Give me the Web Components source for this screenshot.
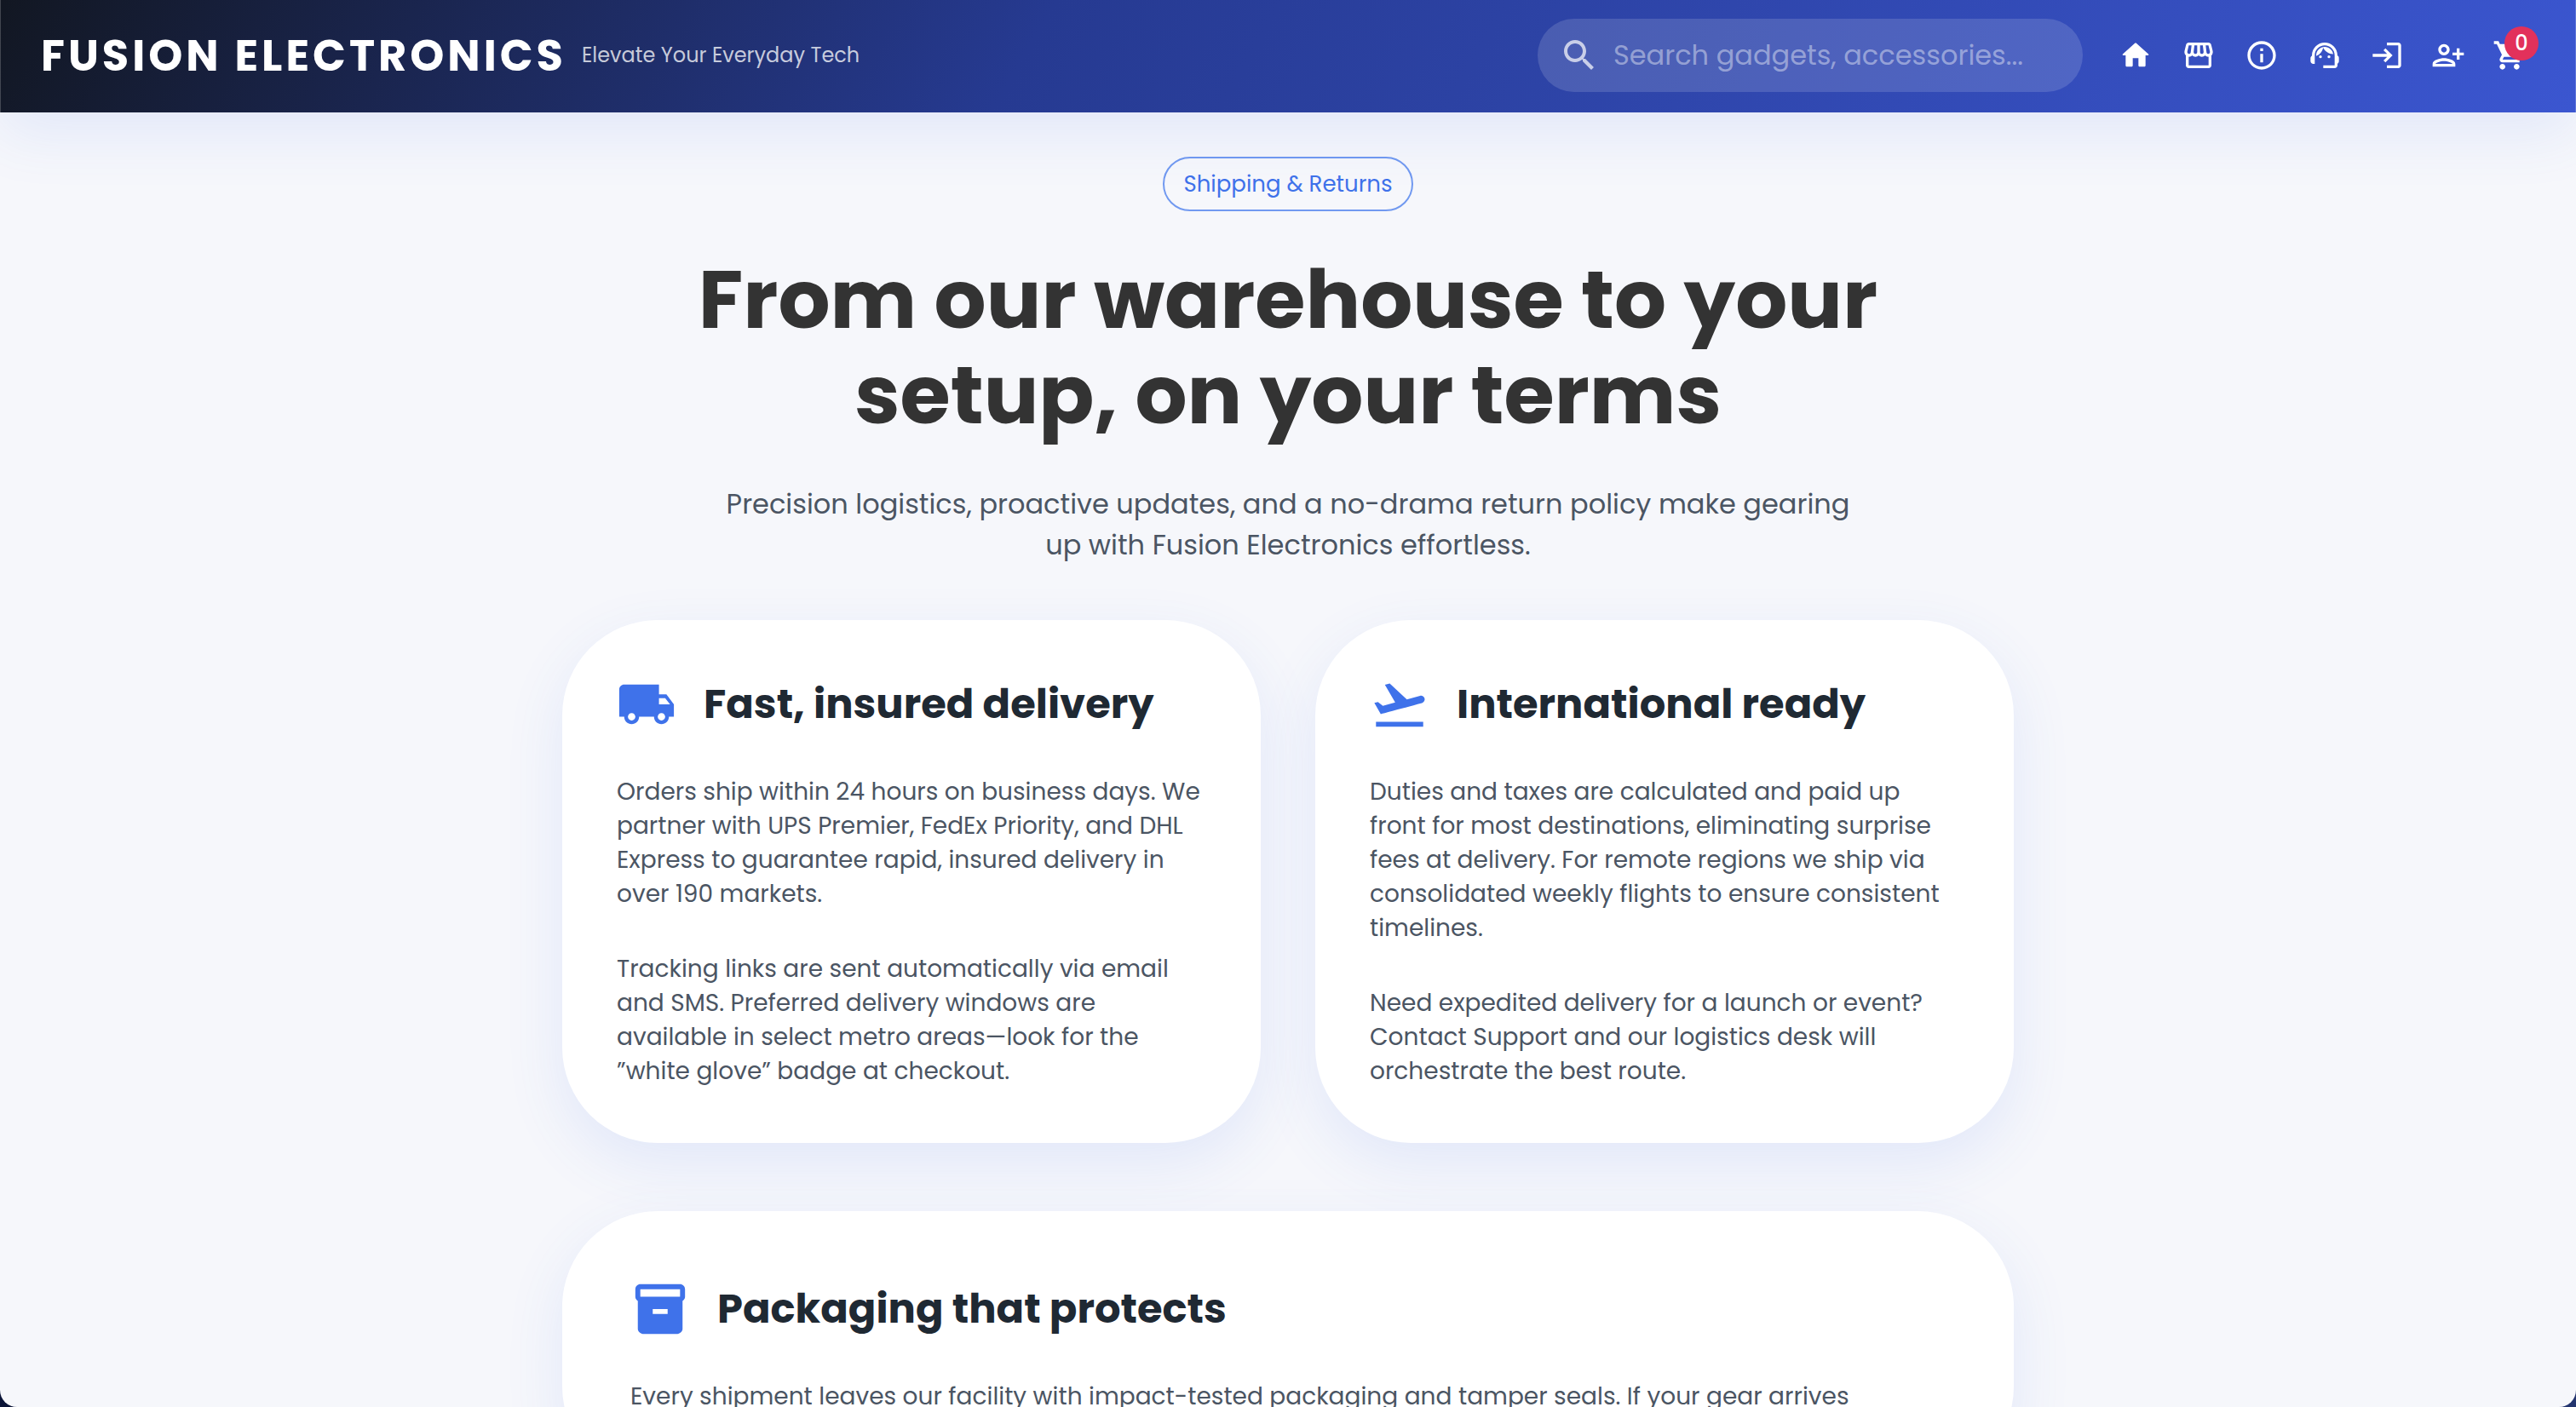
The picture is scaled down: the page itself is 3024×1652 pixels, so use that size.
<!DOCTYPE html>
<html lang="en">
<head>
<meta charset="utf-8">
<title>Shipping &amp; Returns – Fusion Electronics</title>
<style>
  html, body { margin: 0; height: 100%; }
  body {
    background: linear-gradient(90deg, #0b1437, #24356f);
    font-family: Poppins, Inter, "Open Sans", sans-serif;
    font-size: 28px;
    --blue: #3f72ea;
    --slate: #4b5563;
    --lift: 0 24px 70px rgba(60, 112, 235, .11);
  }
</style>
</head>
<body>
<fusion-page>
  <fusion-header slot="header"></fusion-header>
  <fusion-hero>
    <span slot="tag">Shipping &amp; Returns</span>
    <span slot="title">From our warehouse to your setup, on your terms</span>
    <span slot="lead">Precision logistics, proactive updates, and a no-drama return policy make gearing up with Fusion Electronics effortless.</span>
  </fusion-hero>
  <fusion-cards>
    <fusion-card icon="truck">
      <span slot="title">Fast, insured delivery</span>
      <p>Orders ship within 24 hours on business days. We partner with UPS Premier, FedEx Priority, and DHL Express to guarantee rapid, insured delivery in over 190 markets.</p>
      <p>Tracking links are sent automatically via email and SMS. Preferred delivery windows are available in select metro areas—look for the ”white glove” badge at checkout.</p>
    </fusion-card>
    <fusion-card icon="plane">
      <span slot="title">International ready</span>
      <p>Duties and taxes are calculated and paid up front for most destinations, eliminating surprise fees at delivery. For remote regions we ship via consolidated weekly flights to ensure consistent timelines.</p>
      <p>Need expedited delivery for a launch or event? Contact Support and our logistics desk will orchestrate the best route.</p>
    </fusion-card>
    <fusion-card icon="box" wide>
      <span slot="title">Packaging that protects</span>
      <p>Every shipment leaves our facility with impact-tested packaging and tamper seals. If your gear arrives</p>
    </fusion-card>
  </fusion-cards>
</fusion-page>

<script>
const ICONS = {
  search: '<path d="M15.5 14h-.79l-.28-.27C15.41 12.59 16 11.11 16 9.5 16 5.91 13.09 3 9.5 3S3 5.91 3 9.5 5.91 16 9.5 16c1.61 0 3.09-.59 4.23-1.57l.27.28v.79l5 4.99L20.49 19l-4.99-5zm-6 0C7.01 14 5 11.99 5 9.5S7.01 5 9.5 5 14 7.01 14 9.5 11.99 14 9.5 14z"/>',
  home: '<path d="M10 19v-5h4v5c0 .55.45 1 1 1h3c.55 0 1-.45 1-1v-7h1.7c.46 0 .68-.57.33-.87L12.67 3.6c-.38-.34-.96-.34-1.34 0l-8.36 7.53c-.34.3-.13.87.33.87H5v7c0 .55.45 1 1 1h3c.55 0 1-.45 1-1z"/>',
  store: '<path d="M21.9 8.89l-1.05-4.37c-.22-.9-1-1.52-1.91-1.52H5.05c-.9 0-1.69.63-1.9 1.52L2.1 8.89c-.24 1.02-.02 2.06.62 2.88.08.11.19.19.28.29V19c0 1.1.9 2 2 2h14c1.1 0 2-.9 2-2v-6.94c.09-.09.2-.18.28-.28.64-.82.87-1.87.62-2.89zm-2.99-3.9l1.05 4.37c.1.42.01.84-.25 1.17-.14.18-.44.47-.94.47-.61 0-1.14-.49-1.21-1.14L16.98 5l1.93-.01zM13 5h1.96l.54 4.52c.05.39-.07.78-.33 1.07-.22.26-.54.41-.95.41-.67 0-1.22-.59-1.22-1.31V5zM8.49 9.52L9.04 5H11v4.69c0 .72-.55 1.31-1.29 1.31-.34 0-.65-.15-.89-.41-.25-.29-.37-.68-.33-1.07zm-4.45-.16L5.05 5h1.97l-.58 4.86c-.08.65-.6 1.14-1.21 1.14-.49 0-.8-.29-.93-.47-.27-.32-.36-.75-.26-1.17zM5 19v-6.03c.08.01.15.03.23.03.87 0 1.66-.36 2.24-.95.6.6 1.4.95 2.31.95.87 0 1.65-.36 2.23-.93.59.57 1.39.93 2.29.93.84 0 1.64-.35 2.24-.95.58.59 1.37.95 2.24.95.08 0 .15-.02.23-.03V19H5z"/>',
  info: '<path d="M11 7h2v2h-2zm0 4h2v6h-2zm1-9C6.48 2 2 6.48 2 12s4.48 10 10 10 10-4.48 10-10S17.52 2 12 2zm0 18c-4.41 0-8-3.59-8-8s3.59-8 8-8 8 3.59 8 8-3.59 8-8 8z"/>',
  support: '<path d="M21 12.22C21 6.73 16.74 3 12 3c-4.69 0-9 3.65-9 9.28-.6.34-1 .98-1 1.72v2c0 1.1.9 2 2 2h1v-6.1c0-3.87 3.13-7 7-7s7 3.13 7 7V19h-8v2h8c1.1 0 2-.9 2-2v-1.22c.59-.31 1-.92 1-1.64v-2.3c0-.7-.41-1.31-1-1.62z"/><circle cx="9" cy="13" r="1"/><circle cx="15" cy="13" r="1"/><path d="M18 11.03C17.52 8.18 15.04 6 12.05 6c-3.03 0-6.29 2.51-6.03 6.45 2.47-1.01 4.33-3.21 4.86-5.89 1.31 2.63 4 4.44 7.12 4.47z"/>',
  login: '<path d="M11 7 9.6 8.4l2.6 2.6H2v2h10.2l-2.6 2.6L11 17l5-5-5-5zm9 12h-8v2h8c1.1 0 2-.9 2-2V5c0-1.1-.9-2-2-2h-8v2h8v14z"/>',
  join: '<path d="M13 8c0-2.21-1.79-4-4-4S5 5.79 5 8s1.79 4 4 4 4-1.79 4-4zm-2 0c0 1.1-.9 2-2 2s-2-.9-2-2 .9-2 2-2 2 .9 2 2zM1 18v2h16v-2c0-2.66-5.33-4-8-4s-8 1.34-8 4zm2 0c.2-.71 3.3-2 6-2 2.69 0 5.78 1.28 6 2H3zm17-3v-3h3v-2h-3V7h-2v3h-3v2h3v3h2z"/>',
  cart: '<path d="M7 18c-1.1 0-1.99.9-1.99 2S5.9 22 7 22s2-.9 2-2-.9-2-2-2zM1 2v2h2l3.6 7.59-1.35 2.45c-.16.28-.25.61-.25.96 0 1.1.9 2 2 2h12v-2H7.42c-.14 0-.25-.11-.25-.25l.03-.12.9-1.63h7.45c.75 0 1.41-.41 1.75-1.03l3.58-6.49c.08-.14.12-.31.12-.48 0-.55-.45-1-1-1H5.21l-.94-2H1zm16 16c-1.1 0-1.99.9-1.99 2s.89 2 1.99 2 2-.9 2-2-.9-2-2-2z"/>',
  truck: '<path d="M20 8h-3V4H3c-1.1 0-2 .9-2 2v11h2c0 1.66 1.34 3 3 3s3-1.34 3-3h6c0 1.66 1.34 3 3 3s3-1.34 3-3h2v-5l-3-4zM6 18.5c-.83 0-1.5-.67-1.5-1.5s.67-1.5 1.5-1.5 1.5.67 1.5 1.5-.67 1.5-1.5 1.5zm13.5-9l1.96 2.5H17V9.5h2.5zm-1.5 9c-.83 0-1.5-.67-1.5-1.5s.67-1.5 1.5-1.5 1.5.67 1.5 1.5-.67 1.5-1.5 1.5z"/>',
  plane: '<path d="M2.5 19h19v2h-19v-2zm19.57-9.36c-.21-.8-1.04-1.28-1.84-1.06L14.92 10l-6.9-6.43-1.93.51 4.14 7.17-4.97 1.33-1.97-1.54-1.45.39 2.59 4.49s7.12-1.9 16.57-4.43c.81-.23 1.28-1.05 1.07-1.85z"/>',
  box: '<path d="M20 2H4c-1 0-2 .9-2 2v3.01c0 .72.43 1.34 1 1.69V20c0 1.1 1.1 2 2 2h14c.9 0 2-.9 2-2V8.7c.57-.35 1-.97 1-1.69V4c0-1.1-1-2-2-2zm-5 12H9v-2h6v2zm5-7H4V4h16v3z"/>'
};

class FusionIcon extends HTMLElement {
  connectedCallback() {
    if (this.shadowRoot) return;
    this.attachShadow({ mode: 'open' }).innerHTML = `
      <style>
        :host { display: block; flex: none; width: var(--icon-size, 40px); height: var(--icon-size, 40px); }
        svg { display: block; width: 100%; height: 100%; fill: currentColor; }
      </style>
      <svg viewBox="0 0 24 24" aria-hidden="true">${ICONS[this.getAttribute('name')]}</svg>`;
  }
}

class FusionHeader extends HTMLElement {
  constructor() {
    super();
    const link = (icon, label) => `<a href="#${icon}" aria-label="${label}"><fusion-icon name="${icon}"></fusion-icon></a>`;
    this.attachShadow({ mode: 'open' }).innerHTML = `
      <style>
        :host { display: block; position: relative; z-index: 1; }
        header {
          display: flex; align-items: center;
          padding: 22px 41px 24px 47px;
          border: solid rgba(255, 255, 255, .2); border-width: 0 1px;
          color: #fff;
          background: linear-gradient(120deg, #121722 0%, #263a91 40%, #3b56d0 100%) border-box;
          box-shadow: var(--lift);
        }
        .brand { display: flex; align-items: center; gap: 18px; margin-right: auto; }
        .logo { color: inherit; text-decoration: none; font-size: 51px; font-weight: 700; line-height: 64px; letter-spacing: 4px; }
        .tagline { font-size: 24px; line-height: 32px; color: rgba(255, 255, 255, .75); }
        .search {
          display: flex; align-items: center; gap: 16px; box-sizing: border-box;
          width: 640px; height: 86px; padding: 0 25px; margin-right: 26px;
          border-radius: 43px; background: rgba(255, 255, 255, .14);
        }
        .search fusion-icon { --icon-size: 48px; color: rgba(255, 255, 255, .7); }
        input {
          flex: 1; min-width: 0; border: 0; padding: 0; outline: 0; background: none;
          font: inherit; font-size: 32px; line-height: 48px; color: #fff;
        }
        input::placeholder { color: rgba(255, 255, 255, .42); opacity: 1; }
        nav { display: flex; }
        .pages { display: flex; gap: 2px; padding-right: 1px; }
        a:not(.logo), button {
          display: block; padding: 16px; border: 0; background: none; color: #fff; position: relative;
          font: inherit;
        }
        .badge {
          position: absolute; top: 2px; right: 2px; width: 40px; height: 40px; border-radius: 50%;
          background: #e2315b; font-size: 24px; font-weight: 500; line-height: 40px; text-align: center;
        }
      </style>
      <header>
        <div class="brand">
          <a class="logo" href="#top">FUSION ELECTRONICS</a>
          <span class="tagline">Elevate Your Everyday Tech</span>
        </div>
        <label class="search">
          <fusion-icon name="search"></fusion-icon>
          <input type="text" aria-label="Search" placeholder="Search gadgets, accessories...">
        </label>
        <nav aria-label="Main">
          <div class="pages">${link('home', 'Home')}${link('store', 'Shop')}${link('info', 'About')}${link('support', 'Support')}</div>
          ${link('login', 'Log in')}${link('join', 'Sign up')}
          <button type="button" aria-label="Cart"><fusion-icon name="cart"></fusion-icon><span class="badge">0</span></button>
        </nav>
      </header>`;
  }
}

class FusionPage extends HTMLElement {
  constructor() {
    super();
    this.attachShadow({ mode: 'open' }).innerHTML = `
      <style>
        :host { display: block; height: 100vh; overflow: hidden; border-radius: 0 0 20px 20px; background: #f6f7fb; }
        main { display: flex; flex-direction: column; align-items: center; gap: 64px; padding: 52px 48px; }
      </style>
      <slot name="header"></slot>
      <main><slot></slot></main>`;
  }
}

class FusionHero extends HTMLElement {
  constructor() {
    super();
    this.attachShadow({ mode: 'open' }).innerHTML = `
      <style>
        :host { display: flex; flex-direction: column; align-items: center; width: 100%; max-width: 1440px; text-align: center; }
        .tag {
          box-sizing: border-box; height: 64px; padding: 0 22px; border: 2px solid #7199f0; border-radius: 32px;
          font-size: 26px; line-height: 60px; color: var(--blue);
        }
        h1 { margin: 48px 0; font-size: 96px; font-weight: 700; line-height: 112px; color: #333; }
        p { margin: 0; max-width: 1360px; font-size: 32px; line-height: 48px; color: var(--slate); }
      </style>
      <div class="tag"><slot name="tag"></slot></div>
      <h1><slot name="title"></slot></h1>
      <p><slot name="lead"></slot></p>`;
  }
}

class FusionCards extends HTMLElement {
  constructor() {
    super();
    this.attachShadow({ mode: 'open' }).innerHTML = `
      <style>
        :host { display: grid; grid-template-columns: 1fr 1fr; gap: 80px 64px; width: 100%; max-width: 1704px; }
        ::slotted([wide]) { grid-column: 1 / -1; }
      </style>
      <slot></slot>`;
  }
}

class FusionCard extends HTMLElement {
  constructor() {
    super();
    this.attachShadow({ mode: 'open' }).innerHTML = `
      <style>
        :host {
          display: block; padding: 64px; border-radius: 112px; background: #fff;
          box-shadow: var(--lift);
        }
        :host([wide]) { padding: 80px; }
        .head { display: flex; align-items: center; gap: 32px; margin-bottom: 48px; }
        fusion-icon { --icon-size: 70px; color: var(--blue); }
        h2 { margin: 0; font-size: 48px; font-weight: 700; line-height: 64px; color: #1f2933; }
        .body { display: flex; flex-direction: column; gap: 48px; }
        ::slotted(p) { margin: 0; font-size: 28px; line-height: 40px; color: var(--slate); }
      </style>
      <div class="head"><fusion-icon name="${this.getAttribute('icon')}"></fusion-icon><h2><slot name="title"></slot></h2></div>
      <div class="body"><slot></slot></div>`;
  }
}

customElements.define('fusion-icon', FusionIcon);
customElements.define('fusion-header', FusionHeader);
customElements.define('fusion-page', FusionPage);
customElements.define('fusion-hero', FusionHero);
customElements.define('fusion-cards', FusionCards);
customElements.define('fusion-card', FusionCard);
</script>
</body>
</html>
